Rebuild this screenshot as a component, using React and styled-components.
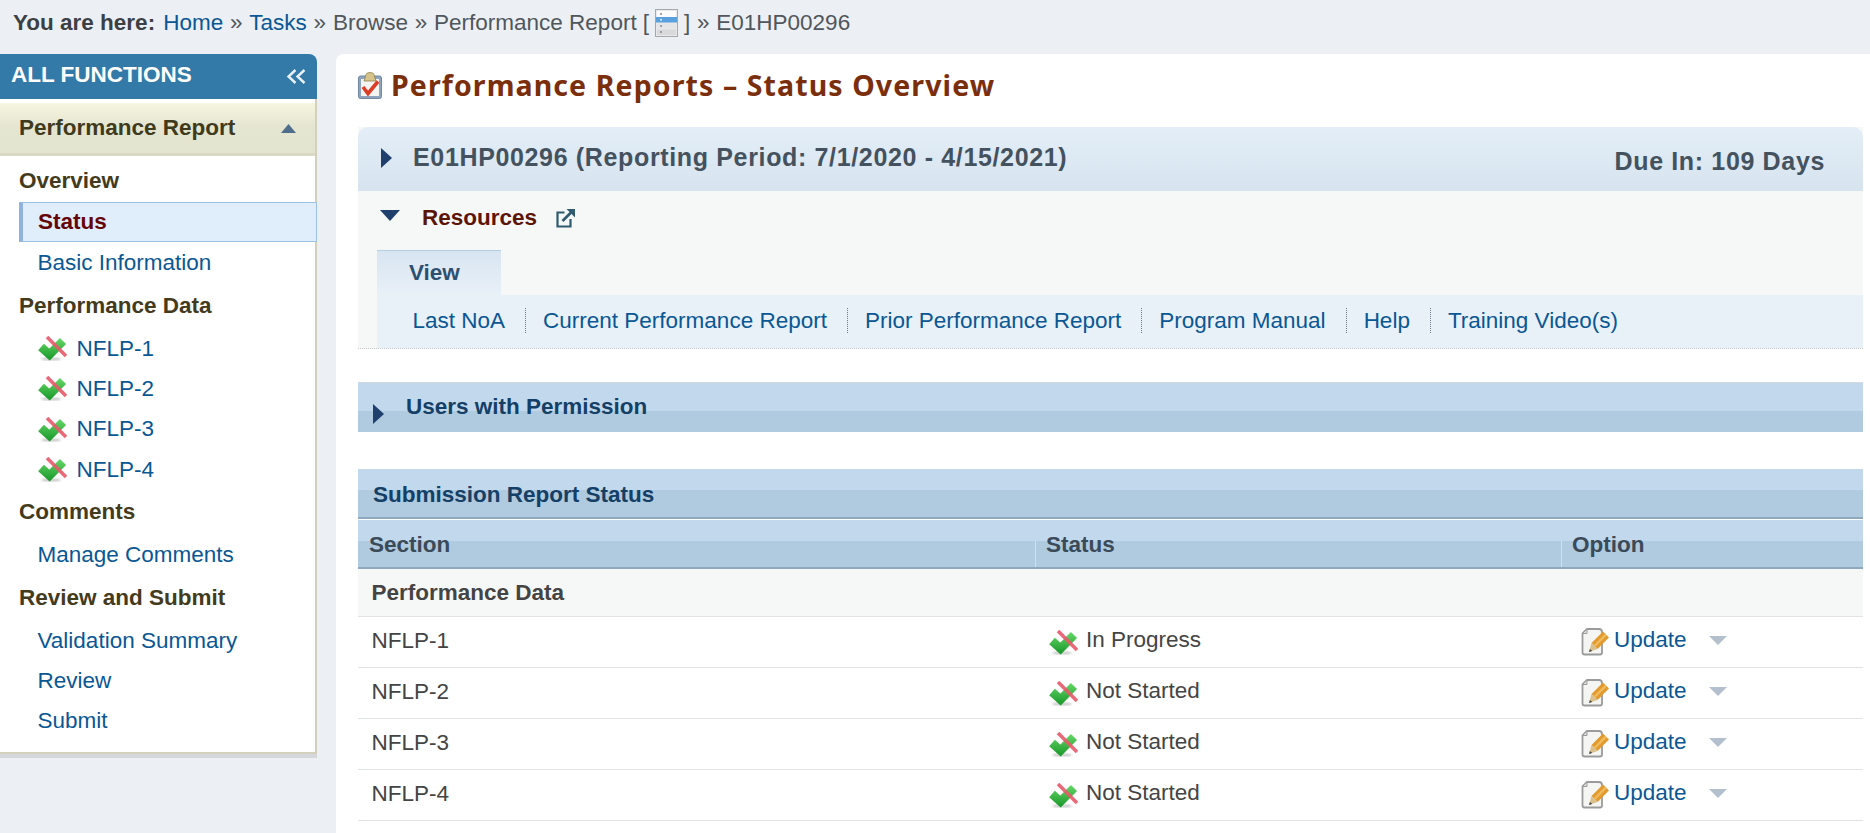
import React from "react";
import styled, { createGlobalStyle } from "styled-components";

const Global = createGlobalStyle`
  html, body { margin: 0; padding: 0; height: 100%; overflow: hidden; background: #ecf0f4; }
  body { font-family: "Liberation Sans", Arial, sans-serif; font-size: 22.5px; color: #444; }
  #root { height: 100%; }
  * { box-sizing: border-box; }
`;

const Page = styled.div`
  height: 833px;
  overflow: hidden;
  display: flex;
  flex-direction: column;
`;
const Crumbs = styled.nav`
  height: 54px;
  flex: none;
  padding: 10px 0 0 13px;
  display: flex;
  align-items: flex-start;
  line-height: 26px;
  color: #50565c;
  white-space: nowrap;
`;
const CrumbLabel = styled.b`
  color: #3c4044;
  margin-right: 8px;
`;
const Link = styled.a`
  color: #0a5794;
  text-decoration: none;
`;
const Sep = styled.span`
  color: #50565c;
  margin: 0 6.8px;
`;
const Bracket = styled.span`
  display: inline-flex;
  align-items: center;
  gap: 6px;
  margin-left: 6px;
  height: 26px;
`;
const Columns = styled.div`
  flex: 1;
  display: flex;
  gap: 19px;
  min-height: 0;
`;
const Sidebar = styled.aside`
  width: 317px;
  flex: none;
  align-self: flex-start;
`;
const SideHead = styled.div`
  height: 45px;
  background: #337aa8;
  border-top-right-radius: 8px;
  color: #fff;
  font-weight: 700;
  padding: 0 10px 4px 11px;
  display: flex;
  align-items: center;
  justify-content: space-between;
`;
const SideChevrons = styled.span`
  display: flex;
  margin-top: 3px;
`;
const SideBody = styled.div`
  background: #fff;
  border-right: 2px solid #d3d1bd;
  border-bottom: 2px solid #d3d1bd;
  box-shadow: 0 4px 0 #d4d8db;
  padding-top: 4px;
  height: 655px;
`;
const Band = styled.div`
  height: 53px;
  background: linear-gradient(#f6f5e0 0, #e5e6d1 45%, #e3e4cf 100%);
  border-bottom: 3px solid #d9d9c5;
  color: #3f3a1c;
  font-weight: 700;
  padding: 0 19px 0 19px;
  display: flex;
  align-items: center;
  justify-content: space-between;
`;
const SideList = styled.ul`
  list-style: none;
  margin: 0;
  padding: 4px 0 0;
`;
const SideHeading = styled.li`
  height: 42px;
  line-height: 42px;
  padding-left: 19px;
  font-weight: 700;
  color: #443a1c;
  margin: 1.5px 0;
  &:first-child { margin: 0; }
`;
const SideItem = styled.li`
  height: 40.4px;
  display: flex;
  align-items: center;
  padding-left: 37.5px;
  gap: 10px;
`;
const SideActive = styled.li`
  height: 40px;
  margin: 0 -2px 1px 19px;
  padding-left: 15px;
  display: flex;
  align-items: center;
  background: #e0edfb;
  border: 1px solid #9dc0e6;
  border-left: 4px solid #8fb3dc;
  font-weight: 700;
  color: #650505;
`;
const Main = styled.main`
  flex: 1;
  background: #fff;
  border-top-left-radius: 8px;
  padding: 0 7px 0 22px;
  min-width: 0;
`;
const Title = styled.h1`
  margin: 0;
  height: 73px;
  display: flex;
  align-items: center;
  gap: 9px;
  padding-bottom: 11px;
  font: 700 28.5px "Noto Sans", sans-serif;
  letter-spacing: 1.1px;
  color: #7a2e0c;
`;
const ReportPanel = styled.section`
  border-bottom: 1px dotted #c4c8cb;
  background: #f6f8f8;
`;
const ReportHead = styled.header`
  height: 64px;
  border-top-left-radius: 10px;
  border-top-right-radius: 10px;
  background: linear-gradient(#e3eef8, #d7e3ee);
  display: flex;
  align-items: center;
  justify-content: space-between;
  color: #44525f;
  font-weight: 700;
  font-size: 25px;
  letter-spacing: 0.65px;
  padding: 0 38px 0 23px;
  margin-bottom: 1px;
`;
const ReportTitle = styled.div`
  display: flex;
  align-items: center;
  gap: 21px;
  margin-top: -3px;
`;
const Due = styled.div`
  margin-top: 5px;
`;
const ArrowRight = styled.span`
  display: inline-block;
  width: 0;
  height: 0;
  border-style: solid;
  border-width: 10.5px 0 10.5px 11px;
  border-color: transparent transparent transparent #1f3f6d;
  flex: none;
`;
const ArrowDown = styled.span`
  display: inline-block;
  width: 0;
  height: 0;
  border-style: solid;
  border-width: 11px 10.5px 0 10.5px;
  border-color: #1f3f6d transparent transparent transparent;
  flex: none;
  margin-bottom: 5px;
`;
const ResourcesRow = styled.div`
  height: 58px;
  display: flex;
  align-items: center;
  padding: 0 0 7px 22px;
  font-weight: 700;
  color: #5c1505;
`;
const ResourcesLabel = styled.span`
  margin: 0 19px 0 22px;
`;
const SubSection = styled.div`
  margin-left: 19px;
`;
const Tab = styled.div`
  width: 124px;
  height: 45px;
  border-top: 1px solid #b5cfe5;
  background: linear-gradient(#d8e5f1, #e8f0f8);
  color: #2e5070;
  font-weight: 700;
  padding-left: 32px;
  line-height: 44px;
`;
const LinkBar = styled.div`
  height: 53px;
  background: #e8f0f8;
  display: flex;
  align-items: center;
  padding: 0 0 2px 35.5px;
`;
const BarLink = styled(Link)`
  display: flex;
  align-items: center;
  height: 25px;
  padding-right: 20px;
  margin-right: 17px;
  border-right: 1px dotted #6f7a85;
  &:last-child { border-right: 0; }
`;
const SplitBar = styled.div`
  background: linear-gradient(#c2d8ec 0, #c2d8ec ${(p) => p.$split}px, #b0cadf ${(p) => p.$split}px, #b0cadf 100%);
`;
const UsersBar = styled(SplitBar)`
  height: 50px;
  margin-top: 33px;
  border-top: 1px solid #d3d8dc;
  display: flex;
  align-items: flex-start;
  padding-left: 15px;
  color: #143f66;
  font-weight: 700;
  gap: 22px;
`;
const UsersLabel = styled.span`
  line-height: 26px;
  margin-top: 11px;
`;
const UsersArrow = styled(ArrowRight)`
  margin-top: 21px;
`;
const SubmissionBar = styled(SplitBar)`
  height: 50px;
  margin-top: 37px;
  padding: 13px 0 0 15px;
  line-height: 26px;
  color: #143f66;
  font-weight: 700;
  border-bottom: 2px solid #8ea9bf;
  margin-bottom: 1px;
`;
const Grid = styled.div`
  display: grid;
  grid-template-columns: 677px 526px 1fr;
`;
const HeadRow = styled(SplitBar)`
  display: grid;
  grid-template-columns: 677px 526px 1fr;
  height: 49px;
  border-bottom: 2px solid #8ea9bf;
  color: #3a4a58;
  font-weight: 700;
`;
const HeadCell = styled.div`
  padding: 12px 0 0 11px;
  line-height: 26px;
  position: relative;
  ${(p) => p.$divider && `
    &::before {
      content: "";
      position: absolute;
      left: 0;
      top: 21px;
      bottom: 0;
      width: 1px;
      background: #cfe0ee;
    }
  `}
`;
const GroupRow = styled.div`
  height: 48px;
  background: #f6f8f8;
  border-bottom: 1px solid #e1e4e4;
  display: flex;
  align-items: center;
  padding: 0 0 0 13.5px;
  font-weight: 700;
  color: #444;
`;
const Row = styled(Grid)`
  height: 51px;
  border-bottom: 1px solid #e1e4e4;
  align-items: center;
  color: #444;
`;
const NameCell = styled.div`
  padding-left: 13.5px;
  margin-top: -3px;
`;
const StatusCell = styled.div`
  padding-left: 14px;
  display: flex;
  align-items: center;
  gap: 8px;
`;
const StatusText = styled.span`
  margin-top: -5px;
`;
const OptionCell = styled.div`
  padding-left: 18.5px;
  display: flex;
  align-items: center;
  gap: 4.5px;
`;
const UpdateLink = styled(Link)`
  margin-top: -4px;
`;
const Caret = styled.span`
  display: inline-block;
  width: 0;
  height: 0;
  border-style: solid;
  border-width: 9px 9px 0 9px;
  border-color: #b3bfcd transparent transparent transparent;
  margin: -4px 0 0 18px;
`;

const MixedIcon = () => (
  <svg width="29" height="25" viewBox="0 0 29 25" style={{ flex: "none" }}>
    <defs>
      <linearGradient id="mixGreen" gradientUnits="userSpaceOnUse" x1="0" y1="2" x2="0" y2="23">
        <stop offset="0" stopColor="#66d868" />
        <stop offset="1" stopColor="#1c9a2c" />
      </linearGradient>
      <filter id="mixBlur"><feGaussianBlur stdDeviation="1" /></filter>
    </defs>
    <ellipse cx="13" cy="23" rx="10" ry="1.6" fill="#999" opacity=".55" filter="url(#mixBlur)" />
    <path d="M3 11 L11.5 18.5 L25 5" fill="none" stroke="url(#mixGreen)" strokeWidth="8.6" />
    <path d="M9 1 L28 20" stroke="#e8596a" strokeOpacity=".9" strokeWidth="3.6" />
  </svg>
);

const ClipboardIcon = () => (
  <svg width="24" height="27" viewBox="0 0 24 27" style={{ flex: "none" }}>
    <rect x=".5" y="4" width="23" height="22.5" rx="2" fill="#8ea4bf" stroke="#71889f" />
    <rect x="3" y="7" width="18" height="17" fill="#f4f4f2" />
    <path d="M7 6 L8 2.5 Q8.5 .5 12 .5 Q15.5 .5 16 2.5 L17 6 L18 9 L6 9 Z" fill="#d6c48a" stroke="#8f8150" strokeWidth=".8" />
    <path d="M5 15 L10 21.5 L20 9.5" fill="none" stroke="#dc3d26" strokeWidth="3.6" />
  </svg>
);

const UpdateIcon = () => (
  <svg width="30" height="28" viewBox="0 0 30 28" style={{ flex: "none" }}>
    <path d="M7 1 H19 Q22 1 22 4 V24.5 Q22 26.5 20 26.5 H4.5 Q2.5 26.5 2.5 24.5 V5.5 Z" fill="#f5f5f3" stroke="#9a9c9c" strokeWidth="1.8" strokeLinejoin="round" />
    <path d="M7 1 V5.5 H2.5 Z" fill="#dcdcda" stroke="#9a9c9c" strokeWidth="1" strokeLinejoin="round" />
    <path d="M26 6.5 L14.5 18" stroke="#e39a2e" strokeWidth="8.5" />
    <path d="M26 6.5 L14.5 18" stroke="#f0bb5c" strokeWidth="2.4" />
    <path d="M11.5 15 L17.5 21 L9 24 Z" fill="#d9c08c" />
    <path d="M9 24 L9.9 21 L12.2 23 Z" fill="#444" />
  </svg>
);

const ListIcon = () => (
  <svg width="23" height="28" viewBox="0 0 23 28" style={{ flex: "none", marginTop: "-1px" }}>
    <rect x=".5" y=".5" width="22" height="27" fill="#e8e9ea" stroke="#a4a9ad" />
    <rect x="2" y="2" width="19" height="6" fill="#fbfbfb" />
    <rect x="1" y="8" width="21" height="5.5" fill="#5aa0de" />
    <rect x="2" y="14.5" width="19" height="5" fill="#e4e5e6" />
    <rect x="2" y="20.5" width="19" height="5.5" fill="#d8d9da" />
    <circle cx="6" cy="5" r="1" fill="#888" />
    <circle cx="6" cy="10.7" r="1" fill="#dfeefb" />
    <circle cx="6" cy="17" r="1" fill="#888" />
    <circle cx="6" cy="23" r="1" fill="#888" />
  </svg>
);

const ExternalIcon = () => (
  <svg width="19" height="20" viewBox="0 0 19 20" fill="none" style={{ flex: "none" }}>
    <path d="M8.5 4.5 H1.5 V18.5 H14.5 V11" stroke="#2f5a70" strokeWidth="2.2" />
    <path d="M6.5 13 L15 4.5" stroke="#2f5a70" strokeWidth="2.6" />
    <path d="M10.5 1 H19 V9.5 Z" fill="#2f5a70" />
  </svg>
);

const ChevronsIcon = () => (
  <svg width="21" height="15" viewBox="0 0 21 15" fill="none" stroke="#e8f1f7" strokeWidth="2.4">
    <path d="M9.5 1 L2.5 7.5 L9.5 14" />
    <path d="M18.5 1 L11.5 7.5 L18.5 14" />
  </svg>
);

const UpCaret = () => (
  <svg width="15" height="9" viewBox="0 0 15 9">
    <path d="M7.5 0 L15 9 H0 Z" fill="#4f6e8c" />
  </svg>
);

const dataItems = ["NFLP-1", "NFLP-2", "NFLP-3", "NFLP-4"];
const barLinks = ["Last NoA", "Current Performance Report", "Prior Performance Report", "Program Manual", "Help", "Training Video(s)"];
const statuses = ["In Progress", "Not Started", "Not Started", "Not Started"];

export default function App() {
  return (
    <Page>
      <Global />
      <Crumbs>
        <CrumbLabel>You are here:</CrumbLabel>
        <Link href="#">Home</Link>
        <Sep>»</Sep>
        <Link href="#">Tasks</Link>
        <Sep>»</Sep>
        <span>Browse</span>
        <Sep>»</Sep>
        <span>Performance Report</span>
        <Bracket>[ <ListIcon /> ]</Bracket>
        <Sep>»</Sep>
        <span>E01HP00296</span>
      </Crumbs>
      <Columns>
        <Sidebar>
          <SideHead>
            <span>ALL FUNCTIONS</span>
            <SideChevrons><ChevronsIcon /></SideChevrons>
          </SideHead>
          <SideBody>
            <Band>
              <span>Performance Report</span>
              <UpCaret />
            </Band>
            <SideList>
              <SideHeading>Overview</SideHeading>
              <SideActive>Status</SideActive>
              <SideItem><Link href="#">Basic Information</Link></SideItem>
              <SideHeading>Performance Data</SideHeading>
              {dataItems.map((n) => (
                <SideItem key={n}><MixedIcon /><Link href="#">{n}</Link></SideItem>
              ))}
              <SideHeading>Comments</SideHeading>
              <SideItem><Link href="#">Manage Comments</Link></SideItem>
              <SideHeading>Review and Submit</SideHeading>
              <SideItem><Link href="#">Validation Summary</Link></SideItem>
              <SideItem><Link href="#">Review</Link></SideItem>
              <SideItem><Link href="#">Submit</Link></SideItem>
            </SideList>
          </SideBody>
        </Sidebar>
        <Main>
          <Title><ClipboardIcon />Performance Reports – Status Overview</Title>
          <ReportPanel>
            <ReportHead>
              <ReportTitle><ArrowRight />E01HP00296 (Reporting Period: 7/1/2020 - 4/15/2021)</ReportTitle>
              <Due>Due In: 109 Days</Due>
            </ReportHead>
            <ResourcesRow>
              <ArrowDown />
              <ResourcesLabel>Resources</ResourcesLabel>
              <ExternalIcon />
            </ResourcesRow>
            <SubSection>
              <Tab>View</Tab>
              <LinkBar>
                {barLinks.map((l) => <BarLink href="#" key={l}>{l}</BarLink>)}
              </LinkBar>
            </SubSection>
          </ReportPanel>
          <UsersBar $split={28}>
            <UsersArrow />
            <UsersLabel>Users with Permission</UsersLabel>
          </UsersBar>
          <SubmissionBar $split={21}>Submission Report Status</SubmissionBar>
          <HeadRow $split={21}>
            <HeadCell>Section</HeadCell>
            <HeadCell $divider>Status</HeadCell>
            <HeadCell $divider>Option</HeadCell>
          </HeadRow>
          <GroupRow>Performance Data</GroupRow>
          {dataItems.map((n, i) => (
            <Row key={n}>
              <NameCell>{n}</NameCell>
              <StatusCell><MixedIcon /><StatusText>{statuses[i]}</StatusText></StatusCell>
              <OptionCell><UpdateIcon /><UpdateLink href="#">Update</UpdateLink><Caret /></OptionCell>
            </Row>
          ))}
        </Main>
      </Columns>
    </Page>
  );
}
